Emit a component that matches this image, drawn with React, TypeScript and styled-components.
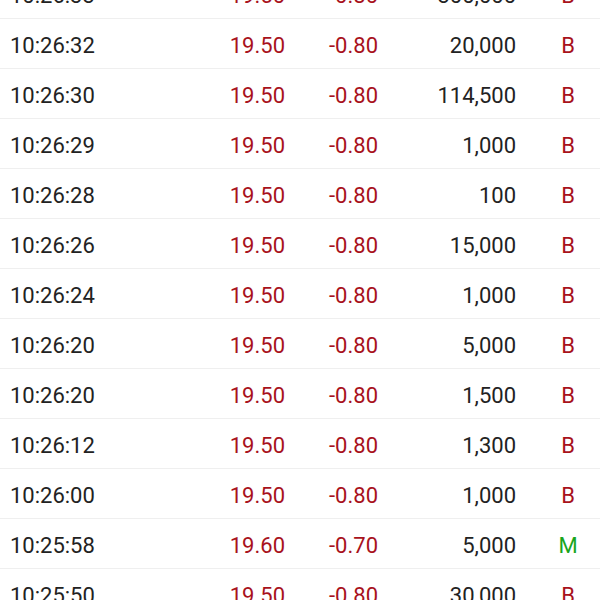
import styled, { createGlobalStyle } from "styled-components";

const GlobalStyle = createGlobalStyle`
  html, body {
    margin: 0;
    padding: 0;
    background: #ffffff;
    overflow: hidden;
  }
  body {
    font-family: Roboto, "Noto Sans", Arial, sans-serif;
  }
`;

const RED = "#a8121c";
const GREEN = "#19a51d";

type Trade = {
  time: string;
  price: string;
  change: string;
  volume: string;
  side: "B" | "M";
};

const trades: Trade[] = [
  { time: "10:26:33", price: "19.50", change: "-0.80", volume: "300,000", side: "B" },
  { time: "10:26:32", price: "19.50", change: "-0.80", volume: "20,000", side: "B" },
  { time: "10:26:30", price: "19.50", change: "-0.80", volume: "114,500", side: "B" },
  { time: "10:26:29", price: "19.50", change: "-0.80", volume: "1,000", side: "B" },
  { time: "10:26:28", price: "19.50", change: "-0.80", volume: "100", side: "B" },
  { time: "10:26:26", price: "19.50", change: "-0.80", volume: "15,000", side: "B" },
  { time: "10:26:24", price: "19.50", change: "-0.80", volume: "1,000", side: "B" },
  { time: "10:26:20", price: "19.50", change: "-0.80", volume: "5,000", side: "B" },
  { time: "10:26:20", price: "19.50", change: "-0.80", volume: "1,500", side: "B" },
  { time: "10:26:12", price: "19.50", change: "-0.80", volume: "1,300", side: "B" },
  { time: "10:26:00", price: "19.50", change: "-0.80", volume: "1,000", side: "B" },
  { time: "10:25:58", price: "19.60", change: "-0.70", volume: "5,000", side: "M" },
  { time: "10:25:50", price: "19.50", change: "-0.80", volume: "30,000", side: "B" },
];

const TradeList = styled.div`
  margin-top: -31px;
  display: flex;
  flex-direction: column;
`;

const Row = styled.div`
  display: grid;
  grid-template-columns: 190px 85px 93px 138px 1fr;
  align-items: center;
  height: 50px;
  padding: 4px 0 0 10px;
  box-sizing: border-box;
  border-bottom: 1px solid #efefef;
  font-size: 22px;
  line-height: 1;
  color: #222222;
`;

const Time = styled.span`
  text-align: left;
`;

const Num = styled.span<{ $red?: boolean }>`
  text-align: right;
  color: ${(p) => (p.$red ? RED : "#222222")};
`;

const Side = styled.span<{ $side: "B" | "M" }>`
  padding-left: 20px;
  text-align: center;
  color: ${(p) => (p.$side === "M" ? GREEN : RED)};
`;

export default function App() {
  return (
    <>
      <GlobalStyle />
      <TradeList>
        {trades.map((t, i) => (
          <Row key={i}>
            <Time>{t.time}</Time>
            <Num $red>{t.price}</Num>
            <Num $red>{t.change}</Num>
            <Num>{t.volume}</Num>
            <Side $side={t.side}>{t.side}</Side>
          </Row>
        ))}
      </TradeList>
    </>
  );
}
